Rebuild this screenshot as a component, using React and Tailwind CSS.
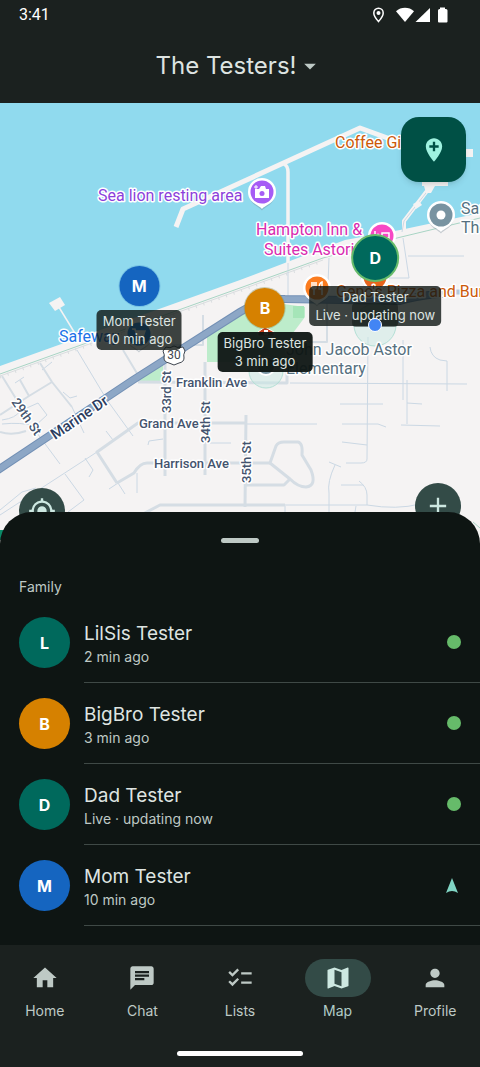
import { useState } from 'react';
import clsx from 'clsx';
import {
  MdArrowDropDown,
  MdHome,
  MdChat,
  MdChecklist,
  MdMap,
  MdPerson,
  MdAdd,
  MdMyLocation,
  MdAddLocation,
} from 'react-icons/md';

const members = [
  { initial: 'L', name: 'LilSis Tester', seen: '2 min ago', color: 'bg-[#00695c]', status: 'online' },
  { initial: 'B', name: 'BigBro Tester', seen: '3 min ago', color: 'bg-[#d68100]', status: 'online' },
  { initial: 'D', name: 'Dad Tester', seen: 'Live · updating now', color: 'bg-[#00695c]', status: 'online' },
  { initial: 'M', name: 'Mom Tester', seen: '10 min ago', color: 'bg-[#1565c0]', status: 'moving' },
];

const tabs = [
  { label: 'Home', icon: MdHome },
  { label: 'Chat', icon: MdChat },
  { label: 'Lists', icon: MdChecklist },
  { label: 'Map', icon: MdMap },
  { label: 'Profile', icon: MdPerson },
];

const StatusBar = () => (
  <div className="flex h-7 items-center justify-between pt-0.5 pl-[19px] pr-8 font-[Roboto,sans-serif] text-base text-white">
    <span>3:41</span>
    <svg width="75" height="16" viewBox="0 0 75 16" fill="#fff" aria-hidden="true">
      <path d="M5.5 1.2a4.7 4.7 0 0 0-4.7 4.7C.8 9.2 5.5 14.500 5.500 14.500s4.700-5.300 4.700-8.600a4.700 4.700 0 0 0-4.700-4.700z" fill="none" stroke="#fff" strokeWidth="1.500" />
      <circle cx="5.500" cy="5.900" r="2" />
      <path d="M32 15 23 4.200C28-.4 36-.4 41 4.200z" />
      <path d="M57 1v14H42.500z" />
      <path d="M67 .5h5V2h1q1.500 0 1.500 1.500v11q0 1-1 1h-7.500q-1 0-1-1v-11Q65 2 66.500 2h.500z" />
    </svg>
  </div>
);

const Poi = ({ x, y, color, children }) => (
  <g transform={`translate(${x} ${y})`}>
    <path d="M0 17c-3-4-13-6-13-17a13 13 0 0 1 26 0c0 11-10 13-13 17z" fill="#6b7f8c" opacity=".35" transform="translate(0 1.500)" />
    <path d="M0 17c-3-4-14-6-14-17a14 14 0 0 1 28 0c0 11-11 13-14 17z" fill="#fff" />
    <circle r="11.500" fill={color} />
    {children}
  </g>
);

const Fork = () => (
  <path d="M-5-6v5q0 2 2 2v6M-1-6v5q0 2-2 2M-3-6v6M5 7V-6q-3 1-3 7h3" fill="none" stroke="#fff" strokeWidth="1.500" />
);

const MapCanvas = () => (
  <svg
    className="absolute inset-0 h-full w-full"
    viewBox="0 103 480 441"
    preserveAspectRatio="xMidYMin slice"
    fontFamily="Roboto, sans-serif"
    aria-label="Map"
  >
    <rect y="102" width="480" height="442" fill="#90daee" />
    <path d="M0 366 240 280 345 240 400 230 480 213V544H0z" fill="#f5f3f3" />

    {/* Parks */}
    <g fill="#bdeccb">
      <path d="M207 335 240 314 262 301 305 307V317L290 337V362H207z" />
      <path d="M138 381 163 364V382z" />
      <path d="M293 306h11v12h-11z" fill="#a5e5b8" />
    </g>

    {/* Piers and breakwater */}
    <g fill="none" stroke="#f5f3f3" strokeWidth="5" strokeLinejoin="round">
      <path d="M176 227 183 209 240 183 360 128 404 144 470 153" />
      <path d="M284 164Q288 166 288 172V264" strokeWidth="3.500" />
      <path d="M57 304 76 335" strokeWidth="1.500" />
      <path d="M433 183 404 221V232" strokeWidth="4" />
    </g>
    <path d="M433 184 404 221 402 232" fill="none" stroke="#cbd8e4" />
    <path d="M49 303 60 297 65 305 55 311z" fill="#f5f3f3" />
    <path d="M422 182h26v4h-13l-4 7h-5l-2-7h-2zM466 149h7v8h-7zM413 204l6-3 3 4-6 4z" fill="#f5f3f3" />

    {/* Railway along the shore */}
    <path d="M0 374 240 288 323 258 397 238 480 218" fill="none" stroke="#a8d4c4" strokeWidth="1" />
    <path d="M0 377 240 291 323 261" fill="none" stroke="#d9dddf" strokeWidth="3" strokeDasharray="1 7" />
    <path d="M0 376 240 290 323 260" fill="none" stroke="#d9dddf" strokeWidth="1" />

    {/* Side streets */}
    <g fill="none" stroke="#cbd8e4" strokeWidth="1" strokeLinejoin="round">
      <path d="M290 383 467 384M368 337 367 459Q367 463 361 463L346 463M407 380V424M401 425 440 426M407 403l15 1" />
      <path d="M340 404h43M342 424h36l8 3M342 442l25 3M335 465Q327 482 329 493L329 512M329 462l12 5M341 485h22" />
      <path d="M359 481q8 6 8 14v10M285 505h82q30 5 53-1M247 424h70M285 506v6M356 506l-1 6" />
      <path d="M288 263v34M329 258l-1 26M403 238l6 40H360M408 256h56M430 347q1 10 10 13l7 1v30M403 340v60" />
      <path d="M210 443h21M148 445l1-4 14-2M137 473v20M118 483l7 11M118 483l-9 6M106 431l7 9M77 350 107 400 133 436" />
      <path d="M0 515 97 452M65 474 84 500 68 512M85 458l8 12-4 7M37 433 60 464M72 407 84 433M63 392l7 6 7-2" />
      <path d="M24 377l-9 6M52 362l-10 8M2 420q14-2 18-9L38 403l9 12-12 11q-14-4-33-2" />
      <path d="M0 510 22 492 36 488" />
      <path d="M473 522 480 528" stroke="#a8d4c4" />
    </g>
    <g fill="none" stroke="#d5dde4" strokeWidth="3" strokeLinejoin="round">
      <path d="M138 382 287 383V340M165 352V476M205 362V475M246 415 245 507" />
      <path d="M117 483 97 452 138 423H247M117 483 134 473Q140 463 147 463H270" />
      <path d="M143 514 160 505H285M246 485H284L290 479" />
      <path d="M270 463 276 446Q278 442 284 442H298Q303 443 302 455L311 470Q317 486 306 487 298 487 290 479z" />
      <path d="M2 376 18 402M20 380 29 396M0 415 29 396 52 382M40 363 52 382 72 407M0 432q12 4 26-1M123 350l15 25" strokeWidth="2" />
      <path d="M203 315V345H172M327 300V342H290" strokeWidth="2" />
    </g>

    {/* Highway */}
    <g fill="none" strokeLinejoin="round">
      <path d="M-5 472 133 380 240 312Q262 298 285 299L400 301Q430 292 480 292" stroke="#7390b5" strokeWidth="8" />
      <path d="M-5 472 133 380 240 312Q262 298 285 299L400 301Q430 292 480 292" stroke="#8da7c6" strokeWidth="6" />
      {/* the road fades into a small street east of the pier */}
      <path d="M436 292H480" stroke="#f5f3f3" strokeWidth="10" />
      <path d="M436 292H480" stroke="#b5c8dc" strokeWidth="5" />
    </g>

    {/* School zones */}
    <g fill="#c9e9e3" fillOpacity=".5" stroke="#b5e0d6">
      <circle cx="375" cy="325" r="21" />
      <circle cx="266" cy="371" r="17" />
    </g>

    {/* Places */}
    <Poi x="262" y="192" color="#a65cf5">
      <path d="M-7-3h4l2-3h4l1 3h3v9H-7z" fill="#fff" />
      <circle cy="1.500" r="2.500" fill="#a65cf5" />
      <path d="M-6-7v4M-8-5h4" stroke="#fff" />
    </Poi>
    <Poi x="382" y="236" color="#f748c4">
      <path d="M-7-5v9M-7 2H7V-3H0v5" fill="none" stroke="#fff" strokeWidth="1.500" />
      <circle cx="-4" cy="-1" r="1.500" fill="#fff" />
    </Poi>
    <Poi x="317" y="288" color="#fb7c1f"><Fork /></Poi>
    <Poi x="375" y="277" color="#e8641c" />
    <Poi x="441" y="215" color="#7893a1"><circle r="4.500" fill="#fff" /></Poi>
    <Poi x="139" y="334" color="#2388e8">
      <path d="M-7-5h3l2 8h6l2-6H-3" fill="#fff" stroke="#fff" strokeWidth="1.500" />
      <circle cx="-1" cy="6" r="1.500" fill="#fff" />
      <circle cx="4" cy="6" r="1.500" fill="#fff" />
    </Poi>
    <circle cx="266" cy="366" r="9" fill="#7893a1" stroke="#fff" strokeWidth="2" />
    <path d="M258 332 265 327 274 332V336H258z" fill="#c9401c" stroke="#fff" />
    <path d="M264 330h4v5h-4z" fill="#fff" />

    {/* Route shield */}
    <path d="M166 347q4 2 8-1 5 3 9 1l2 4q-2 4-1 7 0 4-5 5l-5 2-5-2q-5-1-5-5 1-3-1-7z" fill="#fff" stroke="#3f4650" />
    <text x="174" y="359" textAnchor="middle" fontSize="12" fill="#3f4650">30</text>

    <g fontSize="16" stroke="#fff" strokeWidth="3" strokeLinejoin="round" paintOrder="stroke">
      <text x="98" y="201" fill="#8c3fdb">Sea lion resting area</text>
      <text x="335" y="148" fill="#cc5a0a">Coffee Girl</text>
      <g fill="#d92bb0">
        <text x="256" y="235">Hampton Inn &amp;</text>
        <text x="264" y="255">Suites Astoria</text>
      </g>
      <text x="59" y="342" fill="#1a73e8">Safeway</text>
      <text x="336" y="297" fill="#cc5a0a">Geno's Pizza and Burgers</text>
      <g fill="#567080">
        <text x="461" y="214">San</text>
        <text x="461" y="233">The</text>
        <text x="286" y="355">John Jacob Astor</text>
        <text x="286" y="374">Elementary</text>
      </g>
    </g>
    <g fontSize="13" fontWeight="500" fill="#44546e" stroke="#fff" strokeWidth="3" strokeLinejoin="round" paintOrder="stroke">
      <text x="176" y="387">Franklin Ave</text>
      <text x="139" y="428">Grand Ave</text>
      <text x="154" y="468">Harrison Ave</text>
      <text transform="translate(171 413) rotate(-90)">33rd St</text>
      <text transform="translate(210 443) rotate(-90)">34th St</text>
      <text transform="translate(251 483) rotate(-90)">35th St</text>
      <text transform="translate(11 402) rotate(55)">29th St</text>
      <text transform="translate(55 440) rotate(-34)" fontSize="15" fill="#2c3d5f">Marine Dr</text>
    </g>

    {/* Label of the pin below Dad's */}
    <rect x="352" y="303" width="46" height="24" rx="4" fill="#0e1513" opacity=".5" />
    <path d="M0 530h4v10H0z" fill="#0b8a68" />
  </svg>
);

const MapPin = ({ initial, name, seen, className, dotClass, labelClass }) => (
  <button type="button" className={clsx('absolute flex -translate-x-1/2 flex-col items-center', className)}>
    <span className={clsx('flex items-center justify-center rounded-full text-base font-bold text-white', dotClass)}>
      {initial}
    </span>
    <span className={clsx('rounded-[5px] px-1.5 py-0.5 text-center text-[13px] leading-[18px] whitespace-nowrap text-[#dee4e1]', labelClass)}>
      {name}
      <br />
      {seen}
    </span>
  </button>
);

const FamilyMap = () => (
  <section className="relative h-[441px] overflow-hidden">
    <MapCanvas />

    <MapPin
      initial="M"
      name="Mom Tester"
      seen="10 min ago"
      className="left-[29%] top-[163px] gap-1"
      dotClass="size-10 bg-[#1565c0] ring-1 ring-[#1565c0]/20"
      labelClass="bg-[#0e1513]/80"
    />
    <MapPin
      initial="B"
      name="BigBro Tester"
      seen="3 min ago"
      className="left-[55.2%] top-[185px] gap-1"
      dotClass="size-10 bg-[#d68100] ring-1 ring-[#8a8d4a]/40"
      labelClass="bg-[#0e1513]/95"
    />
    <MapPin
      initial="D"
      name="Dad Tester"
      seen="Live · updating now"
      className="left-[78.2%] top-[131px] gap-1"
      dotClass="size-12 border-2 border-[#66bb6a] bg-[#00695c]"
      labelClass="bg-[#0e1513]/80"
    />
    <span className="absolute left-[78.2%] top-[215px] size-[14px] -translate-x-1/2 rounded-full border border-white bg-[#4285f4]" />

    <button
      type="button"
      aria-label="Add place"
      className="absolute right-[14px] top-[14px] flex size-[65px] items-center justify-center rounded-[18px] bg-[#005045] text-[#9ff2e0] shadow-md"
    >
      <MdAddLocation className="size-7" />
    </button>
    <button
      type="button"
      aria-label="Center on me"
      className="absolute left-[19px] top-[385px] flex size-[46px] items-center justify-center rounded-full bg-[#334b47] text-[#cde8e1]"
    >
      <MdMyLocation className="size-7" />
    </button>
    <button
      type="button"
      aria-label="Zoom in"
      className="absolute right-[19px] top-[380px] flex size-[46px] items-center justify-center rounded-full bg-[#334b47] text-[#cde8e1]"
    >
      <MdAdd className="size-7" />
    </button>
  </section>
);

const MemberRow = ({ initial, name, seen, color, status }) => (
  <li className="flex h-[81px] items-stretch gap-[14px] pl-[19px]">
    <span className={clsx('flex size-[51px] shrink-0 items-center justify-center self-center rounded-full text-base font-bold text-white', color)}>
      {initial}
    </span>
    <div className="flex flex-1 items-center justify-between border-b border-[#3f4946] pr-[19px]">
      <div className="pt-1.5">
        <p className="text-[19px] leading-6 text-[#dee4e1]">{name}</p>
        <p className="text-sm leading-[22px] text-[#bec9c5]">{seen}</p>
      </div>
      {status === 'online' ? (
        <span className="size-[14px] rounded-full bg-[#66bb6a]" />
      ) : (
        <svg className="mr-[3px]" width="12" height="15" viewBox="0 0 12 15" aria-hidden="true">
          <path d="M6 0 12 15Q6 11 0 15z" fill="#80d5c4" />
        </svg>
      )}
    </div>
  </li>
);

const App = () => {
  const [activeTab, setActiveTab] = useState('Map');

  return (
    <div className="flex min-h-screen flex-col bg-[#0e1513] font-[Inter,sans-serif]">
      <header className="h-[103px] bg-[#1b211f]">
        <StatusBar />
        <div className="flex h-[75px] items-center justify-center">
          <h1>
            <button type="button" className="flex items-center text-2xl text-[#dee4e1]">
              The Testers!
              <MdArrowDropDown className="size-7 text-[#bec9c5]" />
            </button>
          </h1>
        </div>
      </header>

      <FamilyMap />

      {/* Member sheet */}
      <section className="relative -mt-8 flex-1 rounded-t-[32px] bg-[#0e1513]">
        <div className="mx-auto mt-[26px] h-[5px] w-[38px] rounded-full bg-[#bec9c5]" />
        <h2 className="mt-[33px] mb-1 pl-[19px] text-sm leading-[22px] text-[#bec9c5]">Family</h2>
        <ul>
          {members.map((member) => (
            <MemberRow key={member.name} {...member} />
          ))}
        </ul>
      </section>

      <nav className="h-[122px] bg-[#1b211f]">
        <div className="grid grid-cols-5 gap-2 pt-[14px]">
          {tabs.map(({ label, icon: Icon }) => (
            <button
              key={label}
              type="button"
              onClick={() => setActiveTab(label)}
              className={clsx('flex flex-col items-center gap-1 text-sm', activeTab === label ? 'text-[#b1ccc6]' : 'text-[#bec9c5]')}
            >
              <span
                className={clsx(
                  'flex h-[38px] w-[66px] items-center justify-center rounded-full',
                  activeTab === label && 'bg-[#334b47] text-[#cde8e1]'
                )}
              >
                <Icon className="size-7" />
              </span>
              {label}
            </button>
          ))}
        </div>
        <div className="mx-auto mt-[30px] h-[5px] w-[126px] rounded-full bg-white" />
      </nav>
    </div>
  );
};

export default App;
